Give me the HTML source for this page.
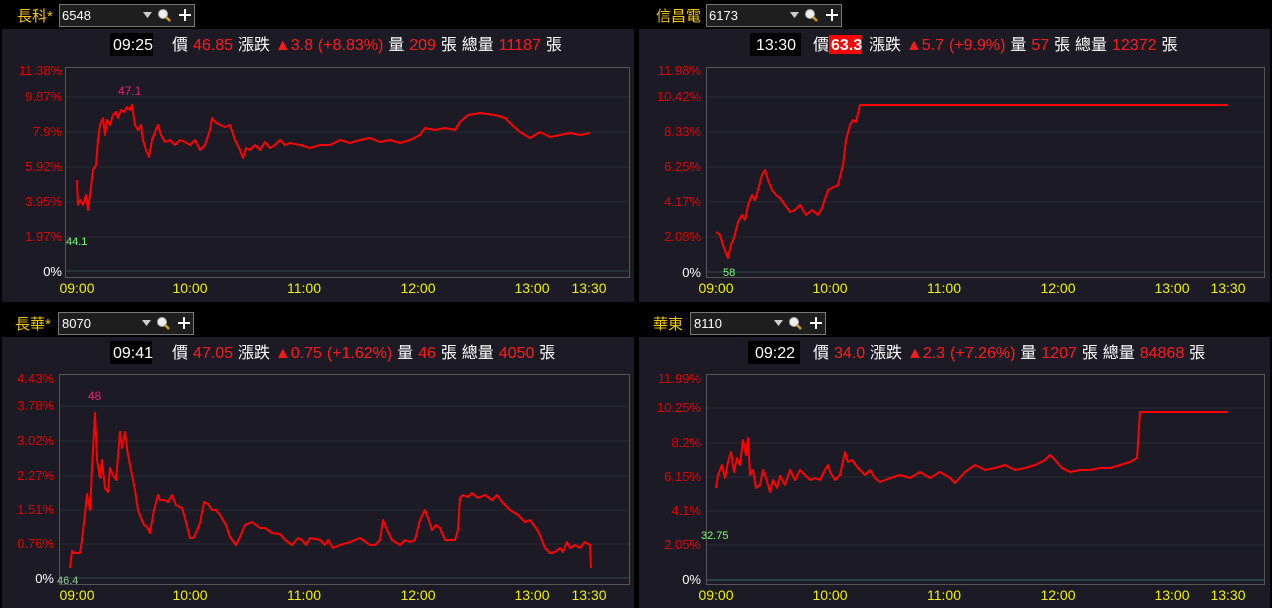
<!DOCTYPE html>
<html><head><meta charset="utf-8"><style>
html,body{margin:0;padding:0;background:#000;width:1272px;height:608px;overflow:hidden}
svg{display:block}
text{font-family:"Liberation Sans","Noto Sans CJK TC",sans-serif}
.yl{font-size:13px;fill:#e00000;text-anchor:end}
.tl{font-size:14px;fill:#f0f000;text-anchor:middle}
.h{font-size:16px;fill:#fff;word-spacing:0.5px}
.tm{font-size:16px;fill:#fff}
.r{fill:#ff1a1a}
.ln{fill:none;stroke:#f00;stroke-width:2;stroke-linejoin:round}
.g{stroke:#2a2a33;stroke-width:1}
</style></head><body>
<svg width="1272" height="608" viewBox="0 0 1272 608">
<defs>
<g id="widget">
<rect x="0.5" y="0.5" width="135" height="22" fill="#1e1e1e" stroke="#777"/>
<path d="M84 8h9l-4.5 6z" fill="#ccc"/>
<circle cx="104" cy="10" r="4.5" fill="#eee" stroke="#aaa"/>
<path d="M107 13l4 4" stroke="#d0a020" stroke-width="2.5"/>
<path d="M126 5v12M120 11h12" stroke="#fff" stroke-width="2"/>
</g>
</defs>

<!-- TOP LEFT -->
<text x="17" y="21" font-size="15" fill="#f0c800">長科*</text>
<use href="#widget" x="59" y="4"/>
<text x="62" y="20" font-size="13" fill="#fff">6548</text>
<rect x="2" y="29" width="632" height="273" fill="#1b1a25"/>
<rect x="110" y="33" width="43" height="23" fill="#000"/>
<text class="tm" x="113" y="50">09:25</text>
<text class="h" x="172" y="50">價 <tspan class="r">46.85</tspan> 漲跌 <tspan class="r">▲3.8 (+8.83%)</tspan> 量 <tspan class="r">209</tspan> 張 總量 <tspan class="r">11187</tspan> 張</text>
<g class="g"><path d="M66 97H629M66 132H629M66 167H629M66 202H629M66 237H629"/></g>
<path d="M66 271H629" stroke="#2f4a4a"/>
<rect x="65.5" y="67.5" width="564" height="210" fill="none" stroke="#555"/>
<text class="yl" x="62" y="75">11.38%</text><text class="yl" x="62" y="101">9.87%</text><text class="yl" x="62" y="136">7.9%</text><text class="yl" x="62" y="171">5.92%</text><text class="yl" x="62" y="206">3.95%</text><text class="yl" x="62" y="241">1.97%</text><text class="yl" x="62" y="276" style="fill:#fff">0%</text>
<text class="tl" x="77" y="293">09:00</text><text class="tl" x="190" y="293">10:00</text><text class="tl" x="304" y="293">11:00</text><text class="tl" x="418" y="293">12:00</text><text class="tl" x="532" y="293">13:00</text><text class="tl" x="589" y="293">13:30</text>
<text x="118" y="95" font-size="12" fill="#e0206a">47.1</text>
<text x="66" y="245" font-size="11" fill="#7f7">44.1</text>
<polyline class="ln" points="77,180 78,205 80,200 83,205 86,195 88,210 90,195 93,170 96,165 98,140 100,125 103,118 105,135 107,120 110,125 113,115 116,112 118,118 121,110 124,112 127,107 130,110 132,105 135,125 138,130 141,125 143,140 146,150 149,157 152,140 155,132 158,125 161,135 165,142 170,140 175,145 180,140 185,142 190,145 195,140 200,150 205,145 210,130 212,118 215,122 220,125 225,127 230,125 235,140 240,150 243,158 246,148 250,150 255,145 260,150 265,142 270,148 275,145 280,140 285,145 290,143 300,145 310,148 320,145 330,145 340,140 350,143 360,140 370,138 380,142 390,140 400,143 410,140 420,135 425,128 435,130 445,128 455,130 460,122 468,115 480,113 495,115 505,118 512,125 520,132 530,138 540,132 550,137 560,135 570,133 580,135 590,133"/>

<!-- TOP RIGHT -->
<text x="656" y="21" font-size="15" fill="#f0c800">信昌電</text>
<use href="#widget" x="706" y="4"/>
<text x="709" y="20" font-size="13" fill="#fff">6173</text>
<rect x="639" y="29" width="631" height="273" fill="#1b1a25"/>
<rect x="750" y="33" width="51" height="23" fill="#000"/>
<text class="tm" x="756" y="50">13:30</text>
<rect x="829" y="35" width="33" height="19" fill="#f00"/>
<text class="h" x="813" y="50">價</text>
<text class="h" x="831" y="50" font-weight="bold">63.3</text>
<text class="h" x="869" y="50">漲跌 <tspan class="r">▲5.7 (+9.9%)</tspan> 量 <tspan class="r">57</tspan> 張 總量 <tspan class="r">12372</tspan> 張</text>
<g class="g"><path d="M707 97H1264M707 132H1264M707 167H1264M707 202H1264M707 237H1264"/></g>
<path d="M707 272H1264" stroke="#2f4a4a"/>
<rect x="706.5" y="67.5" width="558" height="210" fill="none" stroke="#555"/>
<text class="yl" x="701" y="75">11.98%</text><text class="yl" x="701" y="101">10.42%</text><text class="yl" x="701" y="136">8.33%</text><text class="yl" x="701" y="171">6.25%</text><text class="yl" x="701" y="206">4.17%</text><text class="yl" x="701" y="241">2.08%</text><text class="yl" x="701" y="277" style="fill:#fff">0%</text>
<text class="tl" x="716" y="293">09:00</text><text class="tl" x="830" y="293">10:00</text><text class="tl" x="944" y="293">11:00</text><text class="tl" x="1058" y="293">12:00</text><text class="tl" x="1172" y="293">13:00</text><text class="tl" x="1228" y="293">13:30</text>
<text x="723" y="276" font-size="11" fill="#7f7">58</text>
<polyline class="ln" points="716,232 720,235 724,248 728,258 731,245 734,238 738,222 742,215 745,220 748,205 752,195 755,200 758,190 762,175 765,170 768,180 772,190 776,195 780,198 785,205 790,212 795,210 800,205 806,215 812,210 818,215 822,208 828,190 832,188 838,185 843,165 846,140 850,125 853,120 856,122 860,105 862,105 1228,105"/>

<!-- BOTTOM LEFT -->
<text x="15" y="329" font-size="15" fill="#f0c800">長華*</text>
<use href="#widget" x="58" y="312"/>
<text x="62" y="328" font-size="13" fill="#fff">8070</text>
<rect x="2" y="337" width="632" height="271" fill="#1b1a25"/>
<rect x="110" y="341" width="42" height="23" fill="#000"/>
<text class="tm" x="113" y="358">09:41</text>
<text class="h" x="172" y="358">價 <tspan class="r">47.05</tspan> 漲跌 <tspan class="r">▲0.75 (+1.62%)</tspan> 量 <tspan class="r">46</tspan> 張 總量 <tspan class="r">4050</tspan> 張</text>
<g class="g"><path d="M60 406H629M60 441H629M60 476H629M60 510H629M60 544H629"/></g>
<path d="M60 578H629" stroke="#2f4a4a"/>
<rect x="59.5" y="374.5" width="570" height="210" fill="none" stroke="#555"/>
<text class="yl" x="54" y="383">4.43%</text><text class="yl" x="54" y="410">3.78%</text><text class="yl" x="54" y="445">3.02%</text><text class="yl" x="54" y="480">2.27%</text><text class="yl" x="54" y="514">1.51%</text><text class="yl" x="54" y="548">0.76%</text><text class="yl" x="54" y="583" style="fill:#fff">0%</text>
<text class="tl" x="77" y="600">09:00</text><text class="tl" x="190" y="600">10:00</text><text class="tl" x="304" y="600">11:00</text><text class="tl" x="418" y="600">12:00</text><text class="tl" x="532" y="600">13:00</text><text class="tl" x="589" y="600">13:30</text>
<text x="88" y="400" font-size="12" fill="#e0206a">48</text>
<text x="57" y="584" font-size="11" fill="#9c9">46.4</text>
<polyline class="ln" points="70,568 72,551 75,553 80,553 82,540 85,514 87,494 90,510 92,468 95,413 97,460 100,478 102,460 105,488 108,492 110,468 113,475 116,480 120,432 122,448 125,432 128,455 132,475 135,490 138,510 141,518 144,525 147,527 150,533 154,510 158,495 160,500 164,500 168,502 172,495 176,505 182,508 186,522 190,538 193,538 195,535 200,523 204,502 208,504 212,510 216,510 220,515 226,525 230,537 236,545 240,537 245,525 252,522 260,528 265,528 272,533 280,534 285,540 292,545 298,538 302,540 306,545 310,538 320,540 325,545 328,540 333,548 340,545 350,542 360,538 370,545 375,545 380,540 383,520 387,530 392,540 400,545 405,540 410,542 415,540 420,520 425,510 428,518 432,530 436,525 440,528 445,540 450,540 455,540 458,530 460,498 463,495 468,497 472,493 478,498 485,495 492,500 497,495 502,502 510,510 518,515 525,522 530,520 536,528 540,535 545,548 550,553 555,552 560,548 563,552 567,542 570,548 575,545 580,548 585,542 590,545 591,568"/>

<!-- BOTTOM RIGHT -->
<text x="653" y="329" font-size="15" fill="#f0c800">華東</text>
<use href="#widget" x="690" y="312"/>
<text x="694" y="328" font-size="13" fill="#fff">8110</text>
<rect x="639" y="337" width="631" height="271" fill="#1b1a25"/>
<rect x="748" y="341" width="52" height="23" fill="#000"/>
<text class="tm" x="755" y="358">09:22</text>
<text class="h" x="813" y="358">價 <tspan class="r">34.0</tspan> 漲跌 <tspan class="r">▲2.3 (+7.26%)</tspan> 量 <tspan class="r">1207</tspan> 張 總量 <tspan class="r">84868</tspan> 張</text>
<g class="g"><path d="M707 408H1264M707 443H1264M707 477H1264M707 511H1264M707 545H1264"/></g>
<path d="M707 580H1264" stroke="#2f6a6a"/>
<rect x="706.5" y="374.5" width="558" height="210" fill="none" stroke="#555"/>
<text class="yl" x="701" y="383">11.99%</text><text class="yl" x="701" y="412">10.25%</text><text class="yl" x="701" y="447">8.2%</text><text class="yl" x="701" y="481">6.15%</text><text class="yl" x="701" y="515">4.1%</text><text class="yl" x="701" y="549">2.05%</text><text class="yl" x="701" y="584" style="fill:#fff">0%</text>
<text class="tl" x="716" y="600">09:00</text><text class="tl" x="830" y="600">10:00</text><text class="tl" x="944" y="600">11:00</text><text class="tl" x="1058" y="600">12:00</text><text class="tl" x="1172" y="600">13:00</text><text class="tl" x="1228" y="600">13:30</text>
<text x="701" y="539" font-size="11" fill="#7f7">32.75</text>
<polyline class="ln" points="716,488 718,475 722,465 725,478 728,462 731,452 734,472 737,458 740,465 743,440 746,455 748,438 750,475 753,470 756,488 760,485 763,470 766,478 770,492 773,480 777,488 780,476 785,485 790,470 795,480 800,470 805,475 810,480 815,478 820,480 825,470 828,465 830,472 835,480 840,475 845,452 848,462 852,460 858,468 865,475 870,470 875,478 880,482 890,478 900,475 910,478 920,472 930,478 940,472 950,478 955,483 965,472 975,465 985,470 995,468 1005,465 1015,470 1025,468 1035,465 1045,460 1050,455 1055,460 1062,468 1070,472 1080,470 1090,470 1100,468 1110,468 1120,465 1130,462 1137,458 1140,412 1228,412"/>
</svg>
</body></html>
